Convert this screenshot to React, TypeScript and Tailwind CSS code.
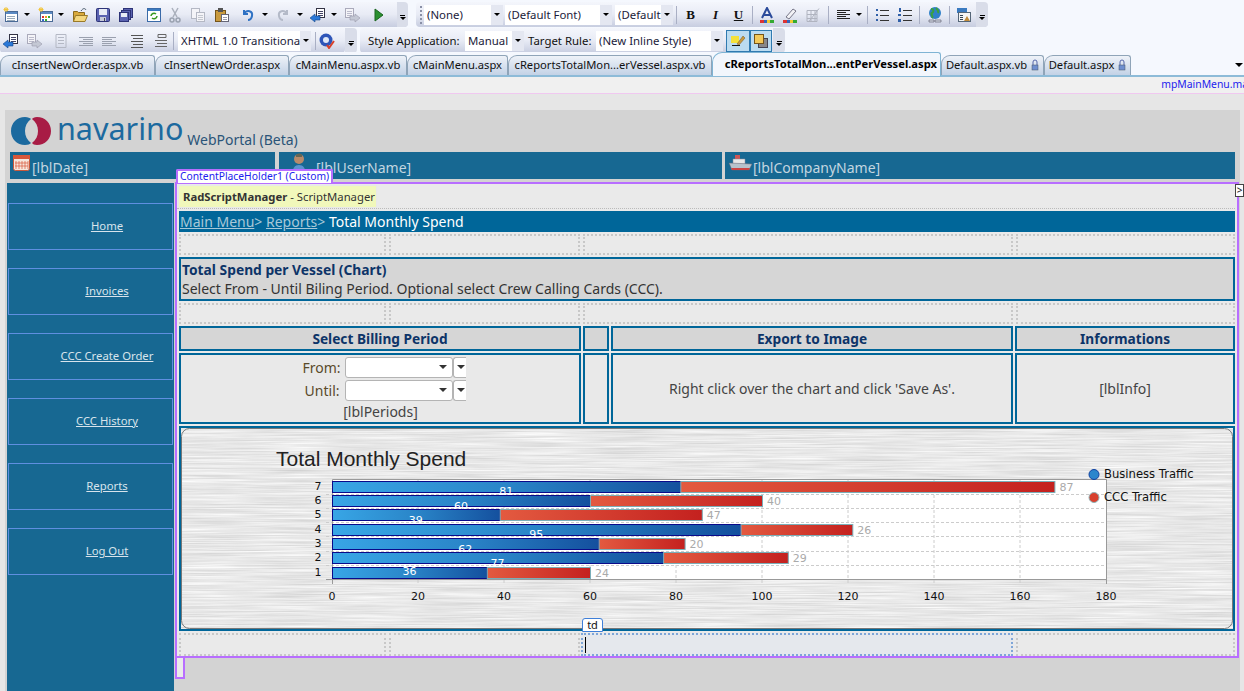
import type { ReactNode } from "react";

const chartRows = [
  { label: "7", blue: 81, red: 87, top: 481, labelY: 491 },
  { label: "6", blue: 60, red: 40, top: 495, labelY: 506 },
  { label: "5", blue: 39, red: 47, top: 509, labelY: 520 },
  { label: "4", blue: 95, red: 26, top: 524, labelY: 534 },
  { label: "3", blue: 62, red: 20, top: 538, labelY: 549 },
  { label: "2", blue: 77, red: 29, top: 552, labelY: 563 },
  { label: "1", blue: 36, red: 24, top: 567, labelY: 571 },
];

const navItems = ["Home", "Invoices", "CCC Create Order", "CCC History", "Reports", "Log Out"];

const tabs = [
  { name: "cInsertNewOrder.aspx.vb", w: "w-[155px]" },
  { name: "cInsertNewOrder.aspx", w: "w-[134px]" },
  { name: "cMainMenu.aspx.vb", w: "w-[118px]" },
  { name: "cMainMenu.aspx", w: "w-[101px]" },
  { name: "cReportsTotalMon...erVessel.aspx.vb", w: "w-[204px]" },
  { name: "cReportsTotalMon...entPerVessel.aspx", w: "w-[229px]", active: true },
  { name: "Default.aspx.vb", w: "w-[103px]", lock: true },
  { name: "Default.aspx", w: "w-[87px]", lock: true },
];

const Svg = ({ children, w = 16 }: { children: ReactNode; w?: number }) => (
  <svg width={w} height={16} viewBox={`0 0 ${w} 16`} className="shrink-0">
    {children}
  </svg>
);

const Caret = () => <span className="w-0 h-0 shrink-0 border-x-[3px] border-x-transparent border-t-[3px] border-t-black" />;

const Sep = () => <span className="w-px h-[18px] shrink-0 bg-[#a9afc4]" />;

const Overflow = () => (
  <span className="flex flex-col items-center gap-px mt-[13px]">
    <span className="w-[5px] h-px bg-black" />
    <span className="w-0 h-0 border-x-[3px] border-x-transparent border-t-[3px] border-t-black" />
  </span>
);

const NewDoc = ({ grid }: { grid?: boolean }) => (
  <Svg>
    <rect x="2.5" y="4.5" width="12" height="10" fill="#fff" stroke="#4a6a96" />
    <rect x="3" y="5" width="11" height="2" fill="#5b8ac4" />
    {grid ? (
      <>
        <rect x="4" y="9" width="2" height="2" fill="#d33" />
        <rect x="7" y="9" width="2" height="2" fill="#e9a21c" />
        <rect x="10" y="9" width="2" height="2" fill="#3a3" />
        <rect x="4" y="12" width="2" height="2" fill="#36c" />
        <rect x="7" y="12" width="2" height="2" fill="#3a3" />
      </>
    ) : (
      <path d="M4 9.5h8M4 11.5h8M4 13.5h8" stroke="#9ab" />
    )}
    <path d="M3 0v5M0.5 2.5h5M1 1l4 3M5 1L1 4" stroke="#f2c53a" />
  </Svg>
);

const Folder = () => (
  <Svg>
    <path d="M1.5 4.5h4l1 1h6v9h-11z" fill="#d9a93c" stroke="#8a6a1e" />
    <path d="M3.5 8.5h12l-2.5 6H1.5z" fill="#f4d77e" stroke="#9a7a28" />
    <path d="M9 4c2-3 4-3 5-1" fill="none" stroke="#456" />
  </Svg>
);

const Save = () => (
  <Svg>
    <rect x="1.5" y="1.5" width="13" height="13" rx="1" fill="#5a62b0" stroke="#2d3377" />
    <rect x="4" y="2" width="8" height="6" fill="#e8ecf6" />
    <rect x="5" y="10" width="6" height="4" fill="#c6cad8" />
    <rect x="9" y="11" width="1" height="3" fill="#445" />
  </Svg>
);

const SaveAll = () => (
  <Svg>
    <rect x="5.5" y="1.5" width="9" height="9" fill="#5a62b0" stroke="#2d3377" />
    <rect x="3.5" y="3.5" width="9" height="9" fill="#5a62b0" stroke="#2d3377" />
    <rect x="1.5" y="5.5" width="9" height="9" fill="#5a62b0" stroke="#2d3377" />
    <rect x="3" y="6" width="6" height="4" fill="#e8ecf6" />
  </Svg>
);

const Refresh = () => (
  <Svg>
    <rect x="1.5" y="1.5" width="13" height="13" fill="#fff" stroke="#3a6aa8" />
    <rect x="2" y="2" width="12" height="2" fill="#3a7ac0" />
    <path d="M5 9a3 3 0 0 1 5-2M11 9a3 3 0 0 1-5 2" fill="none" stroke="#3a9a20" strokeWidth="1.5" />
  </Svg>
);

const Cut = () => (
  <Svg>
    <path d="M5 1l5 9M11 1L6 10" stroke="#aab0bc" strokeWidth="1.5" />
    <circle cx="5" cy="13" r="2" fill="none" stroke="#9aa2b0" strokeWidth="1.5" />
    <circle cx="11" cy="13" r="2" fill="none" stroke="#9aa2b0" strokeWidth="1.5" />
  </Svg>
);

const Copy = () => (
  <Svg>
    <rect x="1.5" y="1.5" width="8" height="10" fill="#f4f4f8" stroke="#b4b8c4" />
    <rect x="6.5" y="5.5" width="8" height="9" fill="#f4f4f8" stroke="#b4b8c4" />
    <path d="M8 8.5h5M8 10.5h5M8 12.5h5" stroke="#c4c8d0" />
  </Svg>
);

const Paste = () => (
  <Svg>
    <rect x="1.5" y="3.5" width="10" height="11" fill="#c99a3e" stroke="#75551a" />
    <rect x="4" y="1" width="5" height="4" fill="#555" />
    <rect x="7.5" y="7.5" width="7" height="7" fill="#fff" stroke="#667" />
    <path d="M9 10.5h4M9 12.5h4" stroke="#99a" />
  </Svg>
);

const Undo = ({ dim }: { dim?: boolean }) => (
  <Svg>
    <path
      d={dim ? "M12 3v4H8M12 7C9 2 3 4 4 9c.4 2 2 4 4 4" : "M3 3v4h4M3 7c3-5 9-3 8 2-.4 2-2 4-4 4"}
      fill="none"
      stroke={dim ? "#b4bac8" : "#2f72c4"}
      strokeWidth="2"
    />
  </Svg>
);

const NavBack = () => (
  <Svg>
    <rect x="6.5" y="1.5" width="8" height="9" fill="#fff" stroke="#334" />
    <path d="M8 4.5h5M8 6.5h5M8 8.5h5" stroke="#446" />
    <path d="M0 11l5-4v2h5v4H5v2z" fill="#2a78d8" stroke="#14488c" strokeWidth="0.6" />
  </Svg>
);

const NavForward = () => (
  <Svg>
    <rect x="1.5" y="1.5" width="8" height="9" fill="#f4f4f8" stroke="#aab" />
    <path d="M3 4.5h5M3 6.5h5M3 8.5h5" stroke="#bbc" />
    <path d="M16 11l-5-4v2H6v4h5v2z" fill="#c4c8d4" stroke="#99a" strokeWidth="0.6" />
  </Svg>
);

const Play = () => (
  <Svg w={10}>
    <path d="M1 2l8 6-8 6z" fill="#2a9030" stroke="#1a6420" />
  </Svg>
);

const Lines = ({ d, color = "#9aa0ae" }: { d: string; color?: string }) => (
  <Svg>
    <path d={d} stroke={color} fill="none" transform="translate(0 .5)" />
  </Svg>
);

const Globe = () => (
  <Svg>
    <circle cx="8" cy="6" r="6" fill="#2f80c8" />
    <path d="M4 2c3 0 3 3 1 4s2 3 0 5M9 1c2 2 3 3 2 5" fill="none" stroke="#3aa040" strokeWidth="2" />
    <path d="M2 13h5v2H2zM8 13h6v2H8z" fill="#d8dde8" stroke="#667" strokeWidth="0.7" />
  </Svg>
);

const ImageTool = () => (
  <Svg>
    <rect x="1" y="1" width="10" height="5" fill="#3a7ac0" />
    <rect x="2.5" y="5.5" width="12" height="9" fill="#f4f4f4" stroke="#567" />
    <path d="M8 14l3-5 3 5z" fill="#c08a3a" />
    <path d="M4 8.5h3M4 10.5h3M4 12.5h3" stroke="#345" />
  </Svg>
);

const SpellCheck = () => (
  <Svg>
    <circle cx="7" cy="7" r="6.5" fill="#2e55b8" />
    <circle cx="7" cy="7" r="3" fill="#dfe8f8" />
    <path d="M8 12l2 3 5-7" fill="none" stroke="#d8402a" strokeWidth="2" />
  </Svg>
);

const Swatches = () => (
  <>
    <path d="M1 13h4v3H1z" fill="#d33" />
    <path d="M5 13h3v3H5z" fill="#36b" />
    <path d="M8 13h3v3H8z" fill="#ec3" />
    <path d="M11 13h4v3h-4z" fill="#3a3" />
  </>
);

const Tool = ({ children, w = "w-[23px]" }: { children: ReactNode; w?: string }) => (
  <span className={`${w} h-4 shrink-0 flex items-center justify-center`}>{children}</span>
);

const Select = ({ text, w, arrow = "w-[12px]" }: { text: string; w: string; arrow?: string }) => (
  <span className={`${w} h-[20px] shrink-0 bg-white flex items-center justify-between text-[11.4px] text-[#1b1b3a] pl-[3px] overflow-hidden`}>
    <span className="whitespace-nowrap overflow-hidden">{text}</span>
    <span className={`${arrow} h-full shrink-0 flex items-center justify-center bg-[#e4e7f1]`}>
      <Caret />
    </span>
  </span>
);

const pillClass = "h-[25px] flex items-center bg-gradient-to-b from-[#f4f6fc] via-[#e8ebf5] to-[#c7cde0] rounded-[4px]";

const Toolbars = () => (
  <div className="h-[52px] bg-[#f5f8fe] shrink-0 pt-[2px] flex flex-col gap-px">
    <div className="flex items-center">
      <div className={`${pillClass} w-[408px] relative`}>
        <Tool w="w-[22px]"><NewDoc /></Tool>
        <Tool w="w-[10px]"><Caret /></Tool>
        <Tool w="w-[16px] ml-[6px]"><NewDoc grid /></Tool>
        <Tool w="w-[14px]"><Caret /></Tool>
        <Tool><Folder /></Tool>
        <Tool><Save /></Tool>
        <Tool><SaveAll /></Tool>
        <span className="ml-[2px]"><Sep /></span>
        <Tool w="w-[23px] ml-[3px]"><Refresh /></Tool>
        <Tool w="w-[20px]"><Cut /></Tool>
        <Tool w="w-[26px]"><Copy /></Tool>
        <Tool w="w-[22px]"><Paste /></Tool>
        <span className="ml-[3px]"><Sep /></span>
        <Tool w="w-[26px]"><Undo /></Tool>
        <Tool w="w-[6px]"><Caret /></Tool>
        <Tool w="w-[30px]"><Undo dim /></Tool>
        <Tool w="w-[4px]"><Caret /></Tool>
        <Tool w="w-[16px] ml-[8px]"><NavBack /></Tool>
        <Tool w="w-[16px]"><Caret /></Tool>
        <Tool w="w-[20px]"><NavForward /></Tool>
        <span className="ml-[4px]"><Sep /></span>
        <Tool w="w-[26px]"><Play /></Tool>
        <span className="ml-auto w-[11px] h-full bg-[#d9dde9] rounded-r-[4px] flex justify-center"><Overflow /></span>
      </div>
      <div className={`${pillClass} ml-[8px] w-[572px] pl-[4px] gap-0`}>
        <span className="w-[2px] h-[18px] mr-[2px] border-l-2 border-dotted border-[#8a90a6]" />
        <Select text="(None)" w="w-[79px]" />
        <span className="w-[2px]" />
        <Select text="(Default Font)" w="w-[107px]" />
        <span className="w-[3px]" />
        <Select text="(Default" w="w-[58px]" />
        <span className="w-[3px]" />
        <Sep />
        <Tool w="w-[27px]"><span className="font-['Liberation_Serif',serif] font-bold text-[13px] text-[#111]">B</span></Tool>
        <Tool><span className="font-['Liberation_Serif',serif] italic font-bold text-[13px] text-[#111]">I</span></Tool>
        <Tool w="w-[23px]"><span className="font-['Liberation_Serif',serif] underline font-bold text-[13px] text-[#111]">U</span></Tool>
        <Tool w="w-[5px]"><Sep /></Tool>
        <Tool w="w-[23px]">
          <Svg>
            <path d="M3 11L8 1l5 10M5 8h6" fill="none" stroke="#2a4a9a" strokeWidth="2" />
            <Swatches />
          </Svg>
        </Tool>
        <Tool>
          <Svg>
            <path d="M4 10l7-8 3 2-7 8z" fill="#f2f2f6" stroke="#778" />
            <Swatches />
          </Svg>
        </Tool>
        <Tool>
          <Lines d="M2 3h10v11H2zM2 7h10M2 11h10M6 3v11M10 3v11M4 14l10-13" color="#b0b4c0" />
        </Tool>
        <Tool w="w-[8px]"><Sep /></Tool>
        <Tool w="w-[22px]"><Lines d="M2 3h13M2 5h9M2 7h13M2 9h9M2 11h13" color="#222" /></Tool>
        <Tool w="w-[10px]"><Caret /></Tool>
        <Tool w="w-[6px]"><Sep /></Tool>
        <Tool>
          <Svg>
            <path d="M6 3.5h9M6 8.5h9M6 13.5h9" stroke="#333" />
            <path d="M2 2h2v2H2zM2 7h2v2H2zM2 12h2v2H2z" fill="#2f5fa8" />
          </Svg>
        </Tool>
        <Tool>
          <Svg>
            <path d="M6 3.5h9M6 8.5h9M6 13.5h9" stroke="#333" />
            <path d="M2 1h2v4H2zM1 7h3v2H1zM1 12h3v3H1z" fill="#2f5fa8" />
          </Svg>
        </Tool>
        <Tool w="w-[7px]"><Sep /></Tool>
        <Tool><Globe /></Tool>
        <Tool w="w-[6px]"><Sep /></Tool>
        <Tool><ImageTool /></Tool>
        <span className="ml-auto w-[12px] h-full bg-[#d9dde9] rounded-r-[4px] flex justify-center"><Overflow /></span>
      </div>
    </div>
    <div className="flex items-center">
      <div className={`${pillClass} w-[345px] pl-[3px]`}>
        <Tool w="w-[16px]"><NavBack /></Tool>
        <Tool w="w-[16px] ml-[7px]"><NavForward /></Tool>
        <span className="ml-[6px]"><Sep /></span>
        <Tool w="w-[26px]"><Lines d="M3 1h10v13H3zM5 4h6M5 7h6M5 10h6" color="#b4b8c4" /></Tool>
        <Tool><Lines d="M1 4h14M5 6h10M1 8h14M5 10h10M1 12h14" /></Tool>
        <Tool><Lines d="M1 4h14M1 6h10M1 8h14M1 10h10M1 12h14" /></Tool>
        <span className="ml-[2px]"><Sep /></span>
        <Tool w="w-[27px]"><Lines d="M3 2h12M5 5h10M3 8h12M5 11h10M3 14h12" color="#555" /></Tool>
        <Tool w="w-[24px]"><Lines d="M5 1h8v3H5zM2 7h12M4 10h10M2 13h12" color="#666" /></Tool>
        <Sep />
        <span className="w-[4px]" />
        <Select text="XHTML 1.0 Transitional" w="w-[133px]" arrow="w-[11px]" />
        <span className="w-[4px]" />
        <Sep />
        <Tool w="w-[22px]"><SpellCheck /></Tool>
      </div>
      <span className="w-[12px] h-[25px] bg-[#d9dde9] rounded-r-[4px] flex justify-center"><Overflow /></span>
      <div className={`${pillClass} ml-[3px] w-[413px] pl-[8px] text-[11.4px] text-[#111]`}>
        <span className="whitespace-nowrap w-[97px]">Style Application:</span>
        <Select text="Manual" w="w-[59px]" />
        <span className="whitespace-nowrap ml-[4px] w-[68px]">Target Rule:</span>
        <Select text="(New Inline Style)" w="w-[127px]" />
        <span className="ml-[3px] w-[24px] h-[22px] bg-[#bcdcf0] border border-[#2f7ab0] flex items-center justify-center">
          <Svg>
            <path d="M1 3h8v7H1z" fill="#f4e13a" />
            <path d="M2 12.5h8" stroke="#111" />
            <path d="M7 11l6-8 2 2-6 7z" fill="#c99a3e" stroke="#75551a" strokeWidth="0.5" />
          </Svg>
        </span>
        <span className="w-[22px] h-[22px] bg-[#bcdcf0] border border-[#2f7ab0] flex items-center justify-center">
          <Svg>
            <rect x="5.5" y="5.5" width="9" height="9" fill="#888" stroke="#445" />
            <rect x="1.5" y="1.5" width="9" height="9" fill="#f3c95a" stroke="#75551a" />
          </Svg>
        </span>
      </div>
      <span className="w-[12px] h-[25px] bg-[#d9dde9] rounded-r-[4px] flex justify-center"><Overflow /></span>
    </div>
  </div>
);

const LockIcon = () => (
  <Svg w={8}>
    <path d="M2 7V4a2 2 0 0 1 4 0v3" fill="none" stroke="#56a" />
    <rect x="1" y="7" width="6" height="5" fill="#6f8fd0" stroke="#456" strokeWidth="0.5" />
  </Svg>
);

const Tabs = () => (
  <div className="h-[25px] shrink-0 flex items-end bg-[#f5f8fe] border-b-2 border-[#8dbbd8] relative text-[11.2px] text-[#111]">
    {tabs.map((tab) =>
      tab.active ? (
        <div
          key={tab.name}
          className={`${tab.w} h-[24px] shrink-0 -mb-[1px] flex items-center justify-end pr-[3px] font-bold text-black bg-[#f2f6fc] border-x border-t border-[#7fb4d4] rounded-tl-[10px] rounded-tr-[3px] whitespace-nowrap`}
        >
          {tab.name}
        </div>
      ) : (
        <div
          key={tab.name}
          className={`${tab.w} h-[20px] shrink-0 flex items-center justify-center gap-[4px] bg-gradient-to-b from-[#eef2f8] to-[#c3d2e6] border-x border-t border-[#8fa4b8] rounded-tl-[9px] rounded-tr-[3px] whitespace-nowrap`}
        >
          {tab.name}
          {tab.lock && <LockIcon />}
        </div>
      ),
    )}
    <span className="absolute right-[1px] top-[11px] w-0 h-0 border-x-[4px] border-x-transparent border-t-[4px] border-t-black" />
  </div>
);

const Logo = () => (
  <svg width="41" height="28" viewBox="0 0 41 28" className="shrink-0">
    <path d="M14 0C6 0 0 6 0 14s6 14 14 14c3 0 5-1 6-2-4-3-6-7-6-12s2-9 6-12c-1-1-3-2-6-2z" fill="#1c6a9f" />
    <path d="M26 0c8 0 14 6 14 14s-6 14-14 14c-3 0-4-1-5-2 4-3 6-7 6-12S25 5 21 2c1-1 2-2 5-2z" fill="#a81c45" />
  </svg>
);

const HeaderBars = () => (
  <div className="flex gap-[3px] ml-[5px] h-[27px] text-[14px] text-[#c3d6e0]">
    <div className="w-[265px] bg-[#176892] flex pl-[2px]">
      <svg width="19" height="19" viewBox="0 0 19 19" className="mt-[1px] shrink-0">
        <rect x="1.5" y="2.5" width="16" height="15" rx="2" fill="#f6e6dc" stroke="#c9583a" />
        <rect x="1" y="2" width="17" height="4" fill="#d8583a" />
        <path d="M4 8v8M7 8v8M10 8v8M13 8v8M16 8v8M3 10h13M3 13h13" stroke="#d8583a" strokeWidth="0.7" />
      </svg>
      <span className="ml-px mt-[6px] leading-5">[lblDate]</span>
    </div>
    <div className="w-[443px] ml-px bg-[#176892] flex pl-[12px]">
      <svg width="16" height="26" viewBox="0 0 16 26" className="shrink-0">
        <circle cx="8" cy="7" r="5" fill="#b88a6a" />
        <path d="M5 3c2-2 5-2 6 0v2H5z" fill="#665" />
        <path d="M1 24c0-8 3-11 7-11s7 3 7 11z" fill="#5b93d0" />
      </svg>
      <span className="ml-[9px] mt-[6px] leading-5">[lblUserName]</span>
    </div>
    <div className="flex-1 mr-[5px] bg-[#176892] flex pl-[3px]">
      <svg width="25" height="22" viewBox="0 0 25 22" className="shrink-0">
        <path d="M7 3h5v6H7z" fill="#c55" />
        <path d="M5 7h12v5H5z" fill="#e8e8e8" stroke="#889" strokeWidth="0.5" />
        <path d="M1 11l23 1-3 6H4z" fill="#b6c2cc" stroke="#667" strokeWidth="0.5" />
        <path d="M3 16h19l-1 2H4z" fill="#c44" />
      </svg>
      <span className="mt-[6px] leading-5">[lblCompanyName]</span>
    </div>
  </div>
);

const Sidebar = () => (
  <div className="w-[167px] ml-[2px] bg-[#176892] shrink-0 pt-[20px] pl-px flex flex-col gap-[18px]">
    {navItems.map((item) => (
      <div key={item} className="w-[165px] h-[47px] border border-[#5f8fe0] flex items-center justify-center pl-[33px]">
        <a className="text-[11.3px] text-[#d8e4ec] underline whitespace-nowrap">{item}</a>
      </div>
    ))}
  </div>
);

const cellSpacer = "border-2 border-dotted border-[#c8c8c8] bg-[#eaeaea] bg-clip-padding";

const SpacerRow = ({ selected }: { selected?: boolean }) => (
  <div className={`grid grid-cols-[207px_191px_430px_219px] gap-[3px] ml-[2px] w-[1056px] ${selected ? "h-[23px]" : "h-[21px]"}`}>
    <div className={cellSpacer} />
    <div className={cellSpacer} />
    {selected ? (
      <div className="-ml-[2px] border-2 border-dotted border-[#7fa6d8] bg-[#e5e8ed] relative">
        <span className="absolute left-[2px] top-[2px] w-px h-[16px] bg-black" />
      </div>
    ) : (
      <div className={cellSpacer} />
    )}
    <div className={cellSpacer} />
  </div>
);

const headCell = "h-[25px] pt-px border-[2px] border-[#006699] bg-[#d6d6d6] flex items-center justify-center text-[13.7px] font-bold text-[#0d3468]";
const bodyCell = "h-[71px] border-[2px] border-[#006699] bg-[#e9e9e9] flex items-center justify-center text-[14px] text-[#444]";

const FakeSelect = () => (
  <span className="flex">
    <span className="w-[108px] h-[21px] bg-white rounded-[3px] border border-[#b4b4b4] flex items-center justify-end pr-[5px]">
      <span className="w-0 h-0 border-x-[4px] border-x-transparent border-t-[4px] border-t-[#333]" />
    </span>
    <span className="w-[13px] h-[21px] bg-white rounded-l-[3px] border-y border-l border-[#b4b4b4] flex items-center pl-[3px]">
      <span className="w-0 h-0 border-x-[4px] border-x-transparent border-t-[4px] border-t-[#333]" />
    </span>
  </span>
);

const Chart = () => (
  <svg viewBox="181 428 1052 201" width="1052" height="201" className="block">
    <defs>
      <filter id="brushed" x="0" y="0" width="100%" height="100%" colorInterpolationFilters="sRGB">
        <feTurbulence type="fractalNoise" baseFrequency="0.012 0.7" numOctaves="3" seed="4" />
        <feColorMatrix values="0.2 0 0 0 0.81  0.2 0 0 0 0.81  0.2 0 0 0 0.81  0 0 0 0 1" />
      </filter>
      <linearGradient id="blueBar">
        <stop offset="0" stopColor="#38a6e6" />
        <stop offset="0.5" stopColor="#2a85c8" />
        <stop offset="1" stopColor="#14509e" />
      </linearGradient>
      <linearGradient id="redBar">
        <stop offset="0" stopColor="#e35a40" />
        <stop offset="1" stopColor="#c4211f" />
      </linearGradient>
    </defs>
    <rect x="181" y="428" width="1052" height="201" fill="#111" />
    <rect x="181" y="428" width="1052" height="201" rx="8" fill="#eee" />
    <rect x="181" y="428" width="1052" height="201" rx="8" filter="url(#brushed)" />
    <rect x="181.5" y="428.5" width="1051" height="200" rx="8" fill="none" stroke="#777" />
    <text x="276" y="466" fontFamily="Liberation Sans, sans-serif" fontSize="21" fill="#222">
      Total Monthly Spend
    </text>

    <rect x="332" y="480" width="774" height="99" fill="#fff" />
    {[20, 40, 60, 80, 100, 120, 140, 160].map((v) => (
      <line key={v} x1={332 + v * 4.3} x2={332 + v * 4.3} y1="480" y2="584" stroke="#ccc" strokeDasharray="3 2" />
    ))}
    {[494, 508, 522, 536, 551, 565].map((y) => (
      <line key={y} x1="326" x2="1106" y1={y + 0.5} y2={y + 0.5} stroke="#ccc" strokeDasharray="3 2" />
    ))}
    <path d="M332.5 584V479.5H1106.5V584M326 579.5H1106.5" fill="none" stroke="#999" />
    {[0, 20, 40, 60, 80, 100, 120, 140, 160, 180].map((v) => (
      <text key={v} x={332 + v * 4.3} y="600" textAnchor="middle" fontFamily="DejaVu Sans, sans-serif" fontSize="11" fill="#111">
        {v}
      </text>
    ))}
    {chartRows.map((row) => {
      const blueWidth = row.blue * 4.3;
      const redWidth = row.red * 4.3;
      return (
        <g key={row.label} fontFamily="DejaVu Sans, sans-serif" fontSize="11">
          <text x="318" y={row.top + 9} textAnchor="middle" fill="#111">{row.label}</text>
          <rect x="332.5" y={row.top + 0.5} width={blueWidth} height="11" fill="url(#blueBar)" stroke="#0a0a8a" />
          <rect x={332.5 + blueWidth} y={row.top + 0.5} width={redWidth} height="11" fill="url(#redBar)" stroke="#7aaeb8" />
          <text x={332 + blueWidth / 2} y={row.labelY + 4} textAnchor="middle" fill="#fff">{row.blue}</text>
          <text x={332 + blueWidth + redWidth + 5} y={row.top + 10} fill="#aaa">{row.red}</text>
        </g>
      );
    })}
    <g fontFamily="DejaVu Sans, sans-serif" fontSize="11.6" fill="#111">
      <circle cx="1094" cy="474.5" r="5" fill="#2a86cc" stroke="#0f3fa0" />
      <text x="1104" y="478">Business Traffic</text>
      <circle cx="1094" cy="497.5" r="5" fill="#d8402e" stroke="#8fb0b4" />
      <text x="1104" y="501">CCC Traffic</text>
    </g>
  </svg>
);

const Content = () => (
  <div className="relative w-[1064px] h-[476px] shrink-0 ml-px -mt-px border-2 border-[#b86eff] bg-[#eaeaea] pr-[2px]">
    <div className="h-[25px] flex border-b border-dotted border-[#bbb]">
      <div className="ml-px mt-px w-[199px] h-[23px] pt-px bg-[#f1f8bb] border border-[#e8e8e8] flex items-center pl-[4px] text-[11.3px] text-[#333] whitespace-nowrap">
        <b>RadScriptManager</b>&nbsp;- ScriptManager
      </div>
    </div>
    <div className="ml-[2px] mt-[2px] w-[1056px] h-[21px] bg-[#006699] flex items-center pl-px text-[14px] leading-none text-[#a8c8d8] whitespace-nowrap">
      <a className="underline">Main Menu</a>&gt;&nbsp;<a className="underline">Reports</a>&gt;&nbsp;<span className="text-white">Total Monthly Spend</span>
    </div>
    <div className="mt-[2px]"><SpacerRow /></div>
    <div className="ml-[2px] mt-[2px] w-[1056px] h-[44px] pt-px border-[2px] border-[#006699] bg-[#d6d6d6] pl-px text-[14px] leading-[19px] text-[#333]">
      <div className="font-bold text-[13.8px] text-[#0d3468]">Total Spend per Vessel (Chart)</div>
      <div>Select From - Until Biling Period. Optional select Crew Calling Cards (CCC).</div>
    </div>
    <div className="mt-[2px]"><SpacerRow /></div>
    <div className="ml-[2px] mt-[2px] w-[1056px] grid grid-cols-[402px_26px_402px_220px] gap-x-[2px] gap-y-[2px]">
      <div className={headCell}>Select Billing Period</div>
      <div className={headCell} />
      <div className={headCell}>Export to Image</div>
      <div className={headCell}>Informations</div>
      <div className={`${bodyCell} flex-col`}>
        <div className="flex items-center gap-[5px] pl-[8px] h-[22px] text-[#5a4a2a]"><span className="w-[37px] text-right">From:</span> <FakeSelect /></div>
        <div className="flex items-center gap-[5px] pl-[8px] h-[24px] text-[#5a4a2a]"><span className="w-[37px] text-right">Until:</span> <FakeSelect /></div>
        <div className="h-[19px] leading-[19px] text-[#444] pl-px">[lblPeriods]</div>
      </div>
      <div className={bodyCell} />
      <div className={bodyCell}>Right click over the chart and click 'Save As'.</div>
      <div className={bodyCell}>[lblInfo]</div>
    </div>
    <div className="ml-[2px] mt-[2px] w-[1056px] h-[205px] border-[2px] border-[#006699]">
      <Chart />
    </div>
    <div className="mt-[2px]"><SpacerRow selected /></div>

    <div className="absolute -left-[1px] -top-[15px] h-[14px] px-[2px] bg-white border-2 border-b-0 border-[#b86eff] rounded-t-[2px] text-[10.3px] leading-[11px] text-[#2222ee] whitespace-nowrap">
      ContentPlaceHolder1 (Custom)
    </div>
    <div className="absolute left-[405px] top-[434px] w-[21px] h-[14px] bg-white border border-[#3f7fd8] rounded-t-[3px] text-[11px] leading-[12px] text-center text-[#111]">
      td
    </div>
    <div className="absolute -left-[2px] top-[474px] w-[10px] h-[21px] border-2 border-t-0 border-[#b86eff] bg-[#eaeaea]" />
    <div className="absolute -right-[7px] top-[0px] w-[9px] h-[13px] bg-white border border-[#444] text-[10px] leading-[10px] text-center text-[#111]">&gt;</div>
  </div>
);

export default function App() {
  return (
    <div className="w-[1244px] h-[691px] overflow-hidden flex flex-col bg-[#e6e6e6] font-['Noto_Sans',sans-serif]">
      <Toolbars />
      <Tabs />
      <div className="h-[16px] shrink-0 bg-[#f0f0f0] flex items-center justify-end overflow-hidden">
        <span className="text-[10.4px] text-[#2222ee] whitespace-nowrap -mr-[23px]">mpMainMenu.master</span>
      </div>
      <div className="h-px shrink-0 bg-[#f0c8f0]" />
      <div className="flex-1 pl-[5px] pr-[4px] pt-[16px] flex min-h-0">
        <div className="flex-1 bg-[#d3d3d3] flex flex-col">
          <div className="h-[42px] shrink-0 flex items-center pl-[6px]">
            <Logo />
            <span className="ml-[5px] text-[30.5px] leading-none text-[#1c6a9f] -mt-[5px]">navarino</span>
            <span className="ml-[4px] mt-[17px] text-[14px] text-[#2a5478] whitespace-nowrap">WebPortal (Beta)</span>
          </div>
          <HeaderBars />
          <div className="flex flex-1 mt-[4px] min-h-0">
            <Sidebar />
            <Content />
          </div>
        </div>
      </div>
    </div>
  );
}
